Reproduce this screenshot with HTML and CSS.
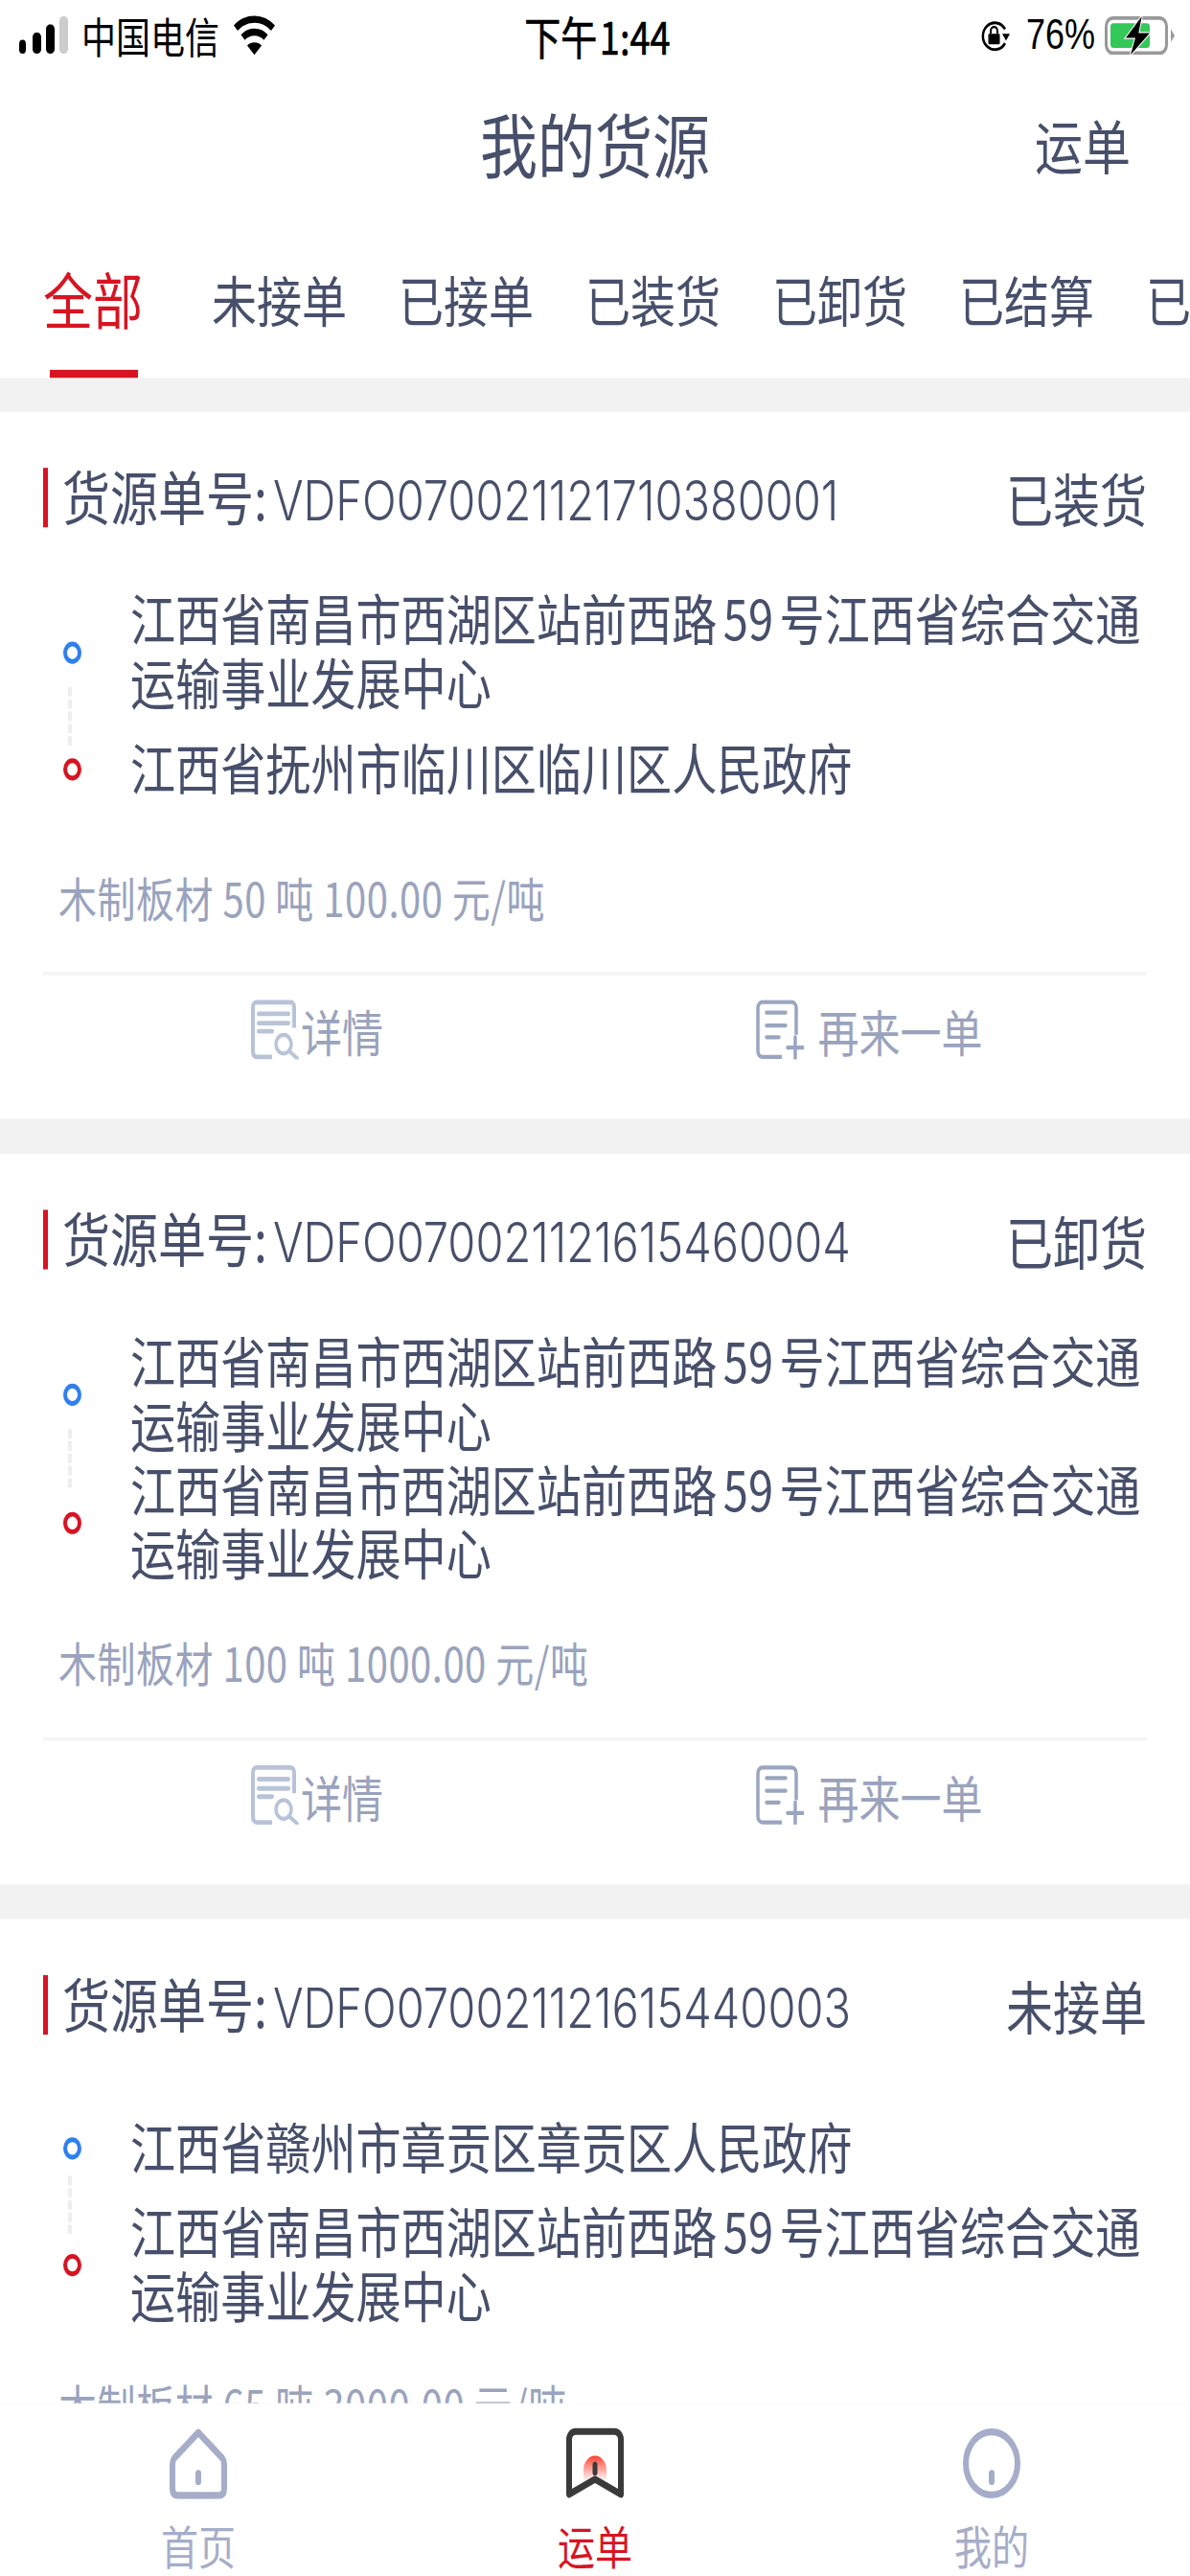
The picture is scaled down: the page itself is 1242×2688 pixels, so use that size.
FILE: index.html
```html
<!DOCTYPE html>
<html lang="zh-CN">

<head>
    <meta charset="UTF-8">
    <meta name="viewport" content="width=device-width, initial-scale=1.0">
    <title>我的货源</title>
    <link rel="stylesheet" href="styles.css">
</head>

<body>
    <div class="app">
        <!-- Status bar -->
        <div class="status-bar">
            <div class="status-left">
                <svg class="signal" width="51" height="32" viewBox="0 0 51 32">
                    <rect x="0" y="20" width="7" height="12" rx="3.5" fill="#000"/>
                    <rect x="14" y="14" width="9" height="18" rx="4" fill="#000"/>
                    <rect x="28" y="7" width="9" height="25" rx="4" fill="#000"/>
                    <rect x="42" y="0" width="9" height="32" rx="4" fill="#ccc"/>
                </svg>
                <span>中国电信</span>
                <svg class="wifi" width="45" height="34" viewBox="0 0 45 34">
                    <path d="M3 11 C14 1 31 1 42 11" fill="none" stroke="#000" stroke-width="6"/>
                    <path d="M10.500 19 C17 13 28 13 34.500 19" fill="none" stroke="#000" stroke-width="6"/>
                    <path d="M15 26 C19 22.500 26 22.500 30 26 L22.500 34 Z" fill="#000"/>
                </svg>
            </div>
            <div class="status-time">下午 1:44</div>
            <div class="status-right">
                <svg class="lock" width="31" height="27" viewBox="0 0 31 27">
                    <path d="M26 20 A12.500 11.500 0 1 1 26 8" fill="none" stroke="#000" stroke-width="2.500"/>
                    <path d="M23 12 L31 12 L27 18 Z" fill="#000"/>
                    <rect x="8.500" y="12" width="12" height="9" rx="1" fill="#000"/>
                    <path d="M11 12 V9.500 a3.500 3.500 0 0 1 7 0 V12" fill="none" stroke="#000" stroke-width="2"/>
                </svg>
                <span class="battery-text">76%</span>
                <svg class="battery" width="74" height="33" viewBox="0 0 74 33">
                    <rect x="1.500" y="1.500" width="63" height="30" rx="7" fill="none" stroke="#999" stroke-width="3"/>
                    <rect x="6" y="6" width="41" height="21" rx="3" fill="#34c759"/>
                    <path d="M69 11 L73 16.500 L69 22 Z" fill="#999"/>
                    <path d="M38.700 0 L22 18.500 L32 18.500 L27 33 L47 14.400 L35.300 14.400 Z" fill="#000" stroke="#fff" stroke-width="2" paint-order="stroke"/>
                </svg>
            </div>
        </div>

        <!-- Title bar -->
        <div class="nav-bar">
            <span></span>
            <h1>我的货源</h1>
            <a class="nav-link">运单</a>
        </div>

        <!-- Status filter tabs -->
        <div class="tabs">
            <div class="tab tab-active">全部</div>
            <div class="tab">未接单</div>
            <div class="tab">已接单</div>
            <div class="tab">已装货</div>
            <div class="tab">已卸货</div>
            <div class="tab">已结算</div>
            <div class="tab">已完成</div>
        </div>

        <!-- Order list -->
        <div class="list">
            <div class="card">
                <div class="card-head">
                    <div class="order-no">货源单号:<span class="order-code">VDFO070021121710380001</span></div>
                    <div class="order-state">已装货</div>
                </div>
                <div class="route">
                    <div class="stop stop-from">江西省南昌市西湖区站前西路 59 号江西省综合交通运输事业发展中心</div>
                    <div class="stop stop-to">江西省抚州市临川区临川区人民政府</div>
                </div>
                <div class="goods">木制板材 50 吨 100.00 元/吨</div>
                <div class="actions">
                    <div class="action">
                        <svg class="icon-detail" width="50" height="51" viewBox="0 0 50 51">
                            <path d="M22 49 H6 a4 4 0 0 1 -4 -4 V6 a4 4 0 0 1 4 -4 H41 a4 4 0 0 1 4 4 V24" fill="none" stroke="#b9c3d8" stroke-width="4"/>
                            <path d="M8 12 H39 M8 20 H39 M8 27 H22" stroke="#b9c3d8" stroke-width="4" stroke-linecap="round"/>
                            <circle cx="34" cy="38" r="8" fill="#fff" stroke="#b9c3d8" stroke-width="3.500"/>
                            <path d="M40 44 L48 50" stroke="#b9c3d8" stroke-width="3.500" stroke-linecap="round"/>
                        </svg>
                        <span>详情</span>
                    </div>
                    <div class="action action-again">
                        <svg width="50" height="51" viewBox="0 0 50 51">
                            <path d="M27 49 H7 a5 5 0 0 1 -5 -5 V7 a5 5 0 0 1 5 -5 H37 a5 5 0 0 1 5 5 V30" fill="none" stroke="#9aa5c0" stroke-width="3.500"/>
                            <path d="M11 11 H31 M11 22 H31 M11 32 H24" stroke="#9aa5c0" stroke-width="3.500" stroke-linecap="round"/>
                            <path d="M33 41 H49 M41 32 V50" stroke="#9aa5c0" stroke-width="3.500" stroke-linecap="round"/>
                        </svg>
                        <span>再来一单</span>
                    </div>
                </div>
            </div>

            <div class="card">
                <div class="card-head">
                    <div class="order-no">货源单号:<span class="order-code">VDFO070021121615460004</span></div>
                    <div class="order-state">已卸货</div>
                </div>
                <div class="route">
                    <div class="stop stop-from">江西省南昌市西湖区站前西路 59 号江西省综合交通运输事业发展中心</div>
                    <div class="stop stop-to">江西省南昌市西湖区站前西路 59 号江西省综合交通运输事业发展中心</div>
                </div>
                <div class="goods">木制板材 100 吨 1000.00 元/吨</div>
                <div class="actions">
                    <div class="action">
                        <svg class="icon-detail" width="50" height="51" viewBox="0 0 50 51">
                            <path d="M22 49 H6 a4 4 0 0 1 -4 -4 V6 a4 4 0 0 1 4 -4 H41 a4 4 0 0 1 4 4 V24" fill="none" stroke="#b9c3d8" stroke-width="4"/>
                            <path d="M8 12 H39 M8 20 H39 M8 27 H22" stroke="#b9c3d8" stroke-width="4" stroke-linecap="round"/>
                            <circle cx="34" cy="38" r="8" fill="#fff" stroke="#b9c3d8" stroke-width="3.500"/>
                            <path d="M40 44 L48 50" stroke="#b9c3d8" stroke-width="3.500" stroke-linecap="round"/>
                        </svg>
                        <span>详情</span>
                    </div>
                    <div class="action action-again">
                        <svg width="50" height="51" viewBox="0 0 50 51">
                            <path d="M27 49 H7 a5 5 0 0 1 -5 -5 V7 a5 5 0 0 1 5 -5 H37 a5 5 0 0 1 5 5 V30" fill="none" stroke="#9aa5c0" stroke-width="3.500"/>
                            <path d="M11 11 H31 M11 22 H31 M11 32 H24" stroke="#9aa5c0" stroke-width="3.500" stroke-linecap="round"/>
                            <path d="M33 41 H49 M41 32 V50" stroke="#9aa5c0" stroke-width="3.500" stroke-linecap="round"/>
                        </svg>
                        <span>再来一单</span>
                    </div>
                </div>
            </div>

            <div class="card">
                <div class="card-head">
                    <div class="order-no">货源单号:<span class="order-code">VDFO070021121615440003</span></div>
                    <div class="order-state">未接单</div>
                </div>
                <div class="route route-short-first">
                    <div class="stop stop-from">江西省赣州市章贡区章贡区人民政府</div>
                    <div class="stop stop-to">江西省南昌市西湖区站前西路 59 号江西省综合交通运输事业发展中心</div>
                </div>
                <div class="goods">木制板材 65 吨 3000.00 元/吨</div>
            </div>
        </div>

        <!-- Bottom navigation -->
        <div class="tab-bar">
            <div class="tab-item">
                <svg width="60" height="61" viewBox="0 0 60 61">
                    <path d="M30 4 L55 26 Q57 28 57 31 V52 Q57 58 51 58 H9 Q3 58 3 52 V31 Q3 28 5 26 Z" fill="none" stroke="#a6adc9" stroke-width="6" stroke-linejoin="round"/>
                    <rect x="27" y="36" width="6" height="13" rx="3" fill="#a6adc9"/>
                </svg>
                <span>首页</span>
            </div>
            <div class="tab-item tab-item-active">
                <svg width="60" height="61" viewBox="0 0 60 61">
                    <defs>
                        <linearGradient id="bookmarkGlow" x1="0" y1="0" x2="0" y2="1">
                            <stop offset="0" stop-color="#ff4433"/>
                            <stop offset="1" stop-color="#ff4433" stop-opacity="0"/>
                        </linearGradient>
                    </defs>
                    <path d="M18 46 V36 a12 12 0 0 1 24 0 V46 L30 40 Z" fill="url(#bookmarkGlow)"/>
                    <path d="M3 57 V10 a7 7 0 0 1 7 -7 H50 a7 7 0 0 1 7 7 V57 L30 44 Z" fill="none" stroke="#3a3a3a" stroke-width="6" stroke-linejoin="round"/>
                    <rect x="27.500" y="29" width="5" height="12" rx="2.500" fill="#3a3a3a"/>
                </svg>
                <span>运单</span>
            </div>
            <div class="tab-item">
                <svg width="60" height="61" viewBox="0 0 60 61">
                    <circle cx="30" cy="30.500" r="27" fill="none" stroke="#a6adc9" stroke-width="6"/>
                    <rect x="27" y="36" width="6" height="13" rx="3" fill="#a6adc9"/>
                </svg>
                <span>我的</span>
            </div>
        </div>
    </div>
</body>

</html>
```

FILE: styles.css
```css
html,
body {
    margin: 0;
    padding: 0;
    height: 2688px;
    overflow: hidden;
    background-color: #ffffff;
}

.app {
    width: 1242px;
    height: 2208px;
    display: flex;
    flex-direction: column;
    overflow: hidden;
    transform: scaleY(1.21739);
    transform-origin: top left;
    font-family: "Noto Sans CJK SC", "Noto Sans", sans-serif;
    color: #474f6b;
}

/* Status bar */
.status-bar {
    flex: none;
    height: 60px;
    display: grid;
    grid-template-columns: 1fr auto 1fr;
    align-items: center;
    padding: 0 15px 0 20px;
    color: #000;
    font-size: 36px;
}

.status-left {
    display: flex;
    align-items: center;
    gap: 14px;
}

.status-left span {
    line-height: 60px;
}

.status-time {
    font-size: 38px;
    word-spacing: -6px;
    -webkit-text-stroke: 0.6px #000;
}

.status-right {
    display: flex;
    align-items: center;
    justify-content: flex-end;
    gap: 17px;
}

.battery-text {
    font-family: "Liberation Sans", sans-serif;
    margin-right: -7px;
}

/* Title bar */
.nav-bar {
    flex: none;
    height: 122px;
    padding-bottom: 10px;
    display: grid;
    grid-template-columns: 1fr auto 1fr;
    align-items: center;
}

.nav-bar h1 {
    margin: 0;
    font-size: 60px;
    font-weight: 400;
}

.nav-link {
    justify-self: end;
    margin-right: 62px;
    padding-top: 4px;
    font-size: 50px;
}

/* Filter tabs */
.tabs {
    flex: none;
    height: 132px;
    display: flex;
    padding-left: 45px;
    overflow: hidden;
}

.tab {
    flex: none;
    box-sizing: border-box;
    height: 100%;
    padding-bottom: 6px;
    display: flex;
    align-items: center;
    margin-right: 54px;
    font-size: 47px;
    white-space: nowrap;
}

.tab-active {
    position: relative;
    margin-right: 72px;
    font-size: 52px;
    color: #d81422;
}

.tab-active::after {
    content: "";
    position: absolute;
    left: 7px;
    right: 5px;
    bottom: 0;
    height: 7px;
    background-color: #d81422;
}

/* Order list */
.list {
    flex: 1;
    min-height: 0;
    overflow: hidden;
    background-color: #f2f2f2;
    padding-top: 29px;
}

.card {
    background-color: #ffffff;
    margin-bottom: 30px;
    padding: 0 45px;
}

.card-head {
    box-sizing: border-box;
    height: 148px;
    padding-bottom: 2px;
    display: flex;
    justify-content: space-between;
    align-items: center;
}

.order-no {
    border-left: 5px solid #d81422;
    padding-left: 15px;
    font-size: 50px;
    line-height: 46px;
    white-space: nowrap;
}

.order-code {
    margin-left: 6px;
    font-family: "Inter", sans-serif;
    font-size: 47px;
    font-weight: 300;
}

.order-state {
    font-size: 49px;
}

/* Route with the two stops */
.route {
    margin-bottom: 38px;
    margin-right: -20px;
}

.stop {
    position: relative;
    min-height: 90px;
    display: flex;
    align-items: center;
    padding-left: 91px;
    font-size: 47.1px;
    line-height: 55px;
    word-spacing: -4px;
}

.stop::before {
    content: "";
    position: absolute;
    left: 21px;
    top: 50%;
    width: 11px;
    height: 11px;
    margin-top: -6px;
    border: 4px solid #2f7ff0;
    border-radius: 50%;
}

.stop-to::before {
    border-color: #d81422;
}

.stop-from::after {
    content: "";
    position: absolute;
    left: 26px;
    top: calc(100% - 22px);
    height: 50px;
    border-left: 4px dashed #eeeeee;
}

.route-short-first .stop-from::after {
    top: 72px;
}

.goods {
    padding-left: 16px;
    font-size: 40px;
    line-height: 60px;
    letter-spacing: 0.5px;
    color: #9aa3bd;
}

.actions {
    margin-top: 34px;
    height: 93px;
    padding-bottom: 30px;
    display: flex;
    border-top: 3px solid #f4f4f4;
}

.action {
    flex: 1;
    display: flex;
    align-items: center;
    justify-content: center;
    gap: 2px;
    padding-right: 4px;
    font-size: 43px;
    color: #9aa3bd;
}

.action-again {
    gap: 15px;
}

/* Bottom navigation */
.tab-bar {
    flex: none;
    height: 148px;
    display: grid;
    grid-template-columns: repeat(3, 1fr);
    background-color: #ffffff;
}

.tab-item {
    display: flex;
    flex-direction: column;
    align-items: center;
    padding-top: 21px;
    font-size: 39px;
    color: #a6adc9;
}

.tab-item span {
    margin-top: 11px;
    line-height: 56px;
}

.tab-item-active {
    color: #d81422;
}
```
